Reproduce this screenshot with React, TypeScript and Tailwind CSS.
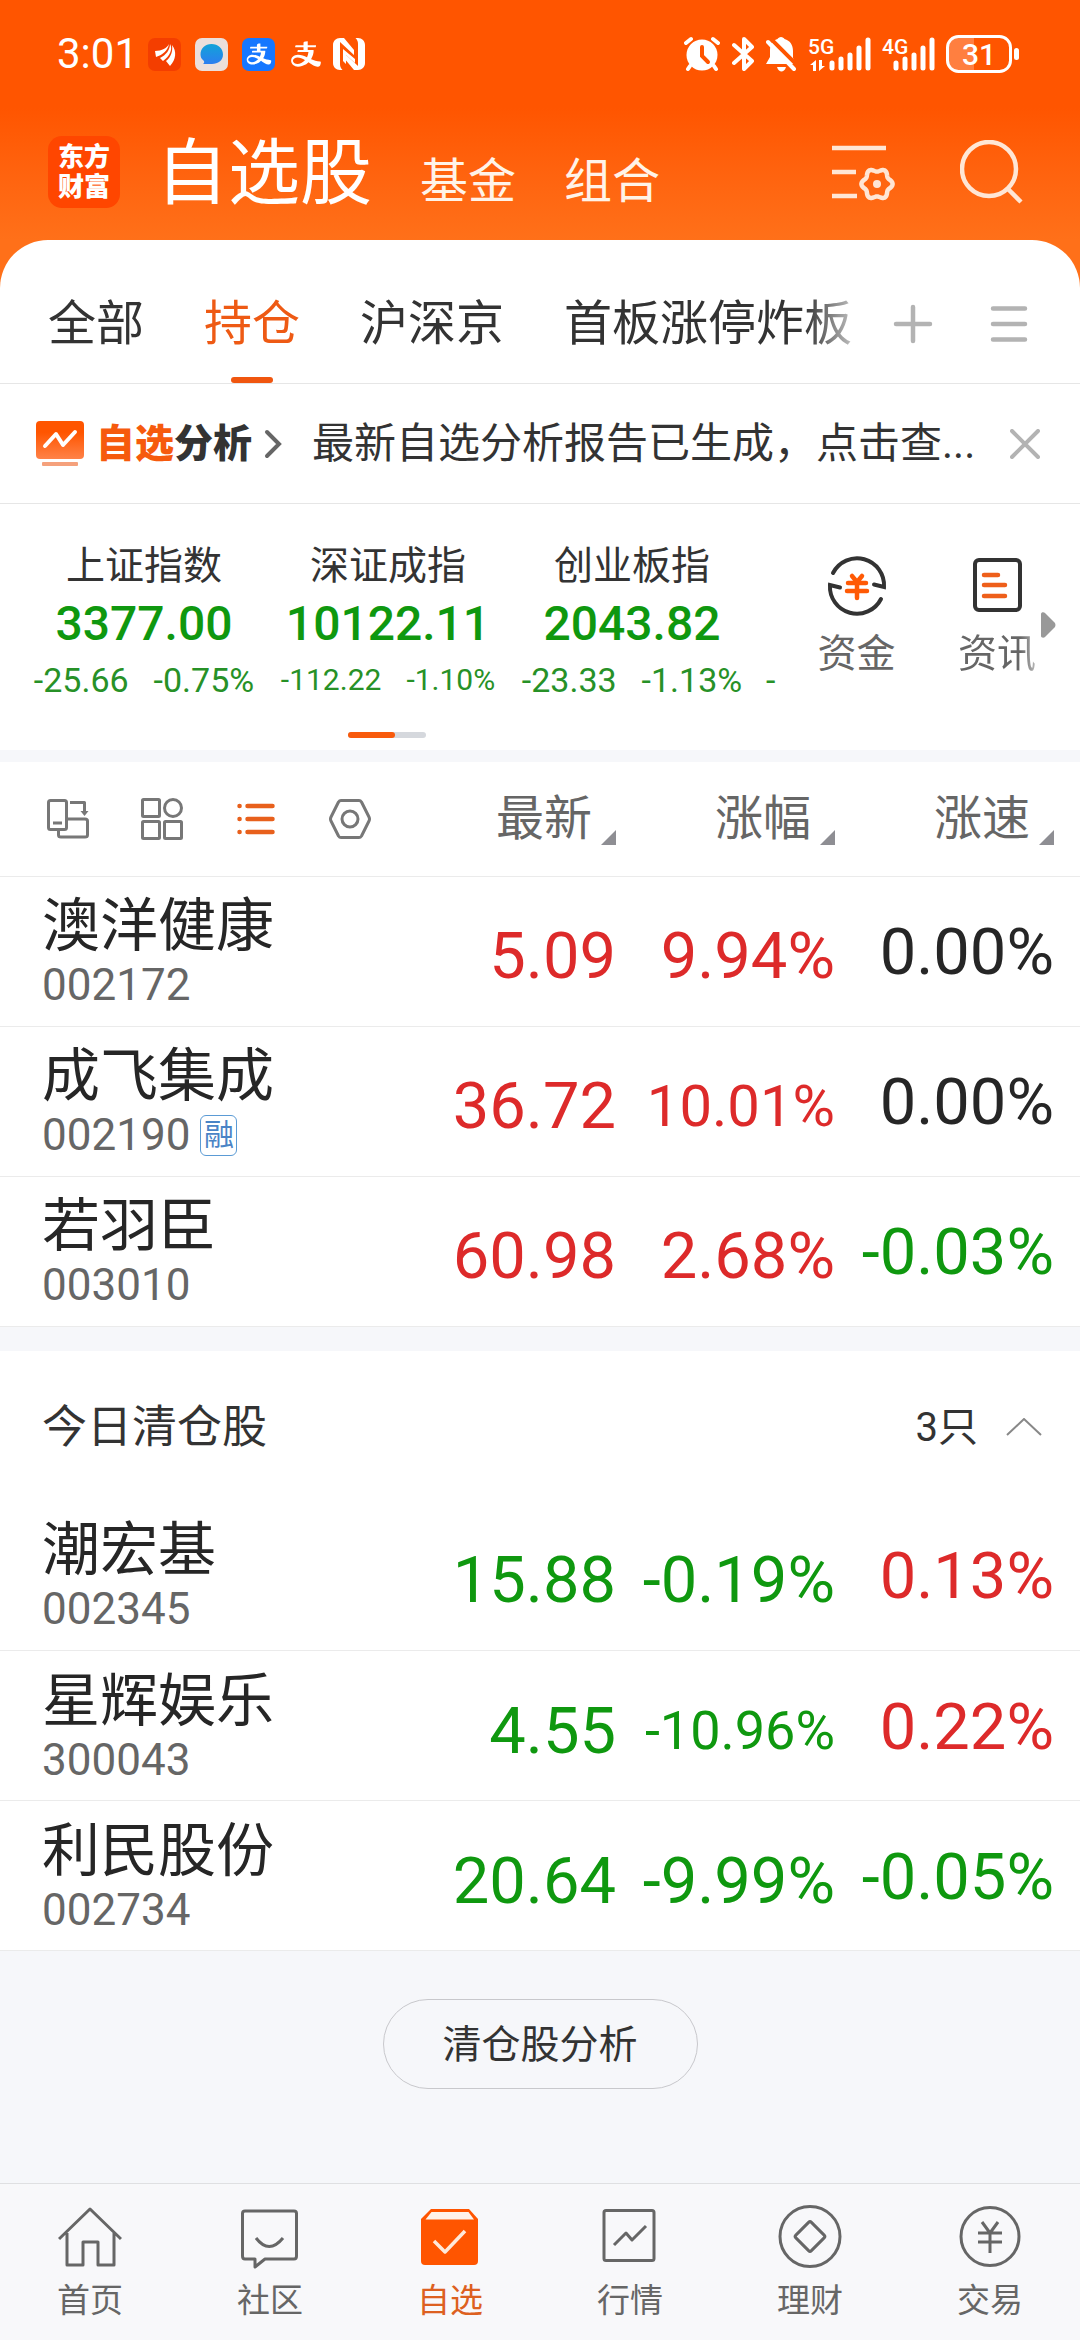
import type { ReactNode } from 'react';
import { AiOutlineAlipay } from 'react-icons/ai';

interface Stock {
    name: string;
    code: string;
    price: string;
    change: string;
    speed: string;
    priceColor: string;
    speedColor: string;
    margin?: boolean;
    changeSize?: string;
}

const RED = 'text-[#dd2a2a]';
const GREEN = 'text-[#0f980f]';
const BLACK = 'text-[#262626]';

const HOLDINGS: Stock[] = [
    { name: '澳洋健康', code: '002172', price: '5.09', change: '9.94%', speed: '0.00%', priceColor: RED, speedColor: BLACK },
    { name: '成飞集成', code: '002190', price: '36.72', change: '10.01%', speed: '0.00%', priceColor: RED, speedColor: BLACK, margin: true, changeSize: 'text-[58px]' },
    { name: '若羽臣', code: '003010', price: '60.98', change: '2.68%', speed: '-0.03%', priceColor: RED, speedColor: GREEN },
];

const CLEARED: Stock[] = [
    { name: '潮宏基', code: '002345', price: '15.88', change: '-0.19%', speed: '0.13%', priceColor: GREEN, speedColor: RED },
    { name: '星辉娱乐', code: '300043', price: '4.55', change: '-10.96%', speed: '0.22%', priceColor: GREEN, speedColor: RED, changeSize: 'text-[54px]' },
    { name: '利民股份', code: '002734', price: '20.64', change: '-9.99%', speed: '-0.05%', priceColor: GREEN, speedColor: GREEN },
];

const INDICES = [
    { name: '上证指数', value: '3377.00', diff: '-25.66', pct: '-0.75%', size: 'text-[34px]' },
    { name: '深证成指', value: '10122.11', diff: '-112.22', pct: '-1.10%', size: 'text-[30px]' },
    { name: '创业板指', value: '2043.82', diff: '-23.33', pct: '-1.13%', size: 'text-[34px]' },
];

const TABS = ['全部', '持仓', '沪深京', '首板涨停炸板'];

// Six-lobed gear outline around the origin
const GEAR_POINTS = Array.from({ length: 72 }, (_, i) => {
    const a = (i * Math.PI) / 36;
    const r = 14 + 1.6 * Math.cos(6 * a);
    return `${(r * Math.cos(a)).toFixed(2)},${(r * Math.sin(a)).toFixed(2)}`;
}).join(' ');

const Signal = ({ label, arrows }: { label: string; arrows?: boolean }) => (
    <svg className="h-[36px] w-[64px]" viewBox="0 0 64 36" fill="#fff">
        <text x={arrows ? 0 : 10} y="18" fontFamily="Roboto" fontSize="21" fontWeight="500">{label}</text>
        {arrows && <path d="M5 25v10H8V24L2 29h3zM11 24v11l6-5h-3v-6z" />}
        <g stroke="#fff" strokeWidth="5" strokeLinecap="round">
            <path d="M24 27v5M33 23v9M42 19v13M51 12v20M60 4v28" />
        </g>
    </svg>
);

const StatusBar = () => (
    <div className="flex h-[108px] items-center pl-[57px] pr-[60px] text-white">
        <span className="text-[42px] leading-[48px]">3:01</span>
        <div className="ml-2.5 flex items-center gap-3.5">
            <svg className="size-[33px]" viewBox="0 0 33 33">
                <rect width="33" height="33" rx="7" fill="#f43e00" />
                <path d="M7 13C14 13 19 10 21 6C20 12 15 17 8 19ZM12 20C18 17 22 12 22 6C25 11 22 18 15 23ZM18 23C23 19 25 13 24 7C29 13 28 22 22 28Z" fill="#fff" />
            </svg>
            <svg className="size-[33px]" viewBox="0 0 33 33">
                <defs>
                    <linearGradient id="bubble" x1="0" y1="0" x2="0" y2="1">
                        <stop offset="0" stopColor="#12a3d8" />
                        <stop offset="1" stopColor="#2c7ef0" />
                    </linearGradient>
                </defs>
                <rect width="33" height="33" rx="7" fill="#ebdfdb" />
                <path d="M16.500 6C23 6 28 10.500 28 16.500S23 26 17 26H8C9.500 25 9.500 23.500 8.500 22.500C6.500 21 5.500 19 5.500 16.500C5.500 10.500 10 6 16.500 6Z" fill="url(#bubble)" />
            </svg>
            <span className="flex size-[33px] items-center justify-center rounded-[7px] bg-[#1677ff]">
                <AiOutlineAlipay className="size-[28px]" />
            </span>
            <AiOutlineAlipay className="size-[34px]" />
            <svg className="-ml-1 size-[32px]" viewBox="0 0 32 32" fill="#fff">
                <path d="M7 0C3 0 0 3 0 7V25C0 29 3 32 7 32H9.500C7.500 30 7 28 7 26V4L21 17V12L11 0Z" />
                <path d="M25 32C29 32 32 29 32 25V7C32 3 29 0 25 0H22.500C24.500 2 25 4 25 6V28L11 15V20L21 32Z" />
                <path d="M10 11L22 21V25L13 17V26L10 23Z" />
            </svg>
        </div>
        <div className="ml-auto flex items-center gap-3">
            <svg className="h-[36px] w-[36px]" viewBox="0 0 36 36" fill="none" strokeLinecap="round">
                <circle cx="18" cy="19" r="15.500" fill="#fff" />
                <path d="M2 7L7 3M34 7L29 3M6 30L4 33M30 30L32 33" stroke="#fff" strokeWidth="4" />
                <path d="M18 11v9l6 6" stroke="#ff5500" strokeWidth="4" />
            </svg>
            <svg className="h-[36px] w-[22px]" viewBox="0 0 22 36" fill="none" stroke="#fff" strokeWidth="4" strokeLinejoin="round" strokeLinecap="round">
                <path d="M2 9L20 25L12 33V3L20 11L2 27" />
            </svg>
            <svg className="h-[36px] w-[30px]" viewBox="0 0 30 36">
                <path d="M15 1C16.500 1 18 2 18.500 3C24 4.500 27 9 27 15V22L30 28H0L4 21V15C4 9 6 4.500 11.500 3C12 2 13.500 1 15 1ZM11 31H20C19 34.500 17 35.500 15.500 35.500S12 34.500 11 31Z" fill="#fff" />
                <path d="M3 1L32 30" stroke="#ff5500" strokeWidth="4" />
                <path d="M2 6L28 33" stroke="#fff" strokeWidth="4" strokeLinecap="round" />
            </svg>
            <Signal label="5G" arrows />
            <div className="-ml-3 -mr-0.5"><Signal label="4G" /></div>
            <svg className="h-[38px] w-[74px]" viewBox="0 0 74 38" fill="none">
                <path d="M28 2H13C7 2 2 7 2 13V25C2 31 7 36 13 36H28Z" fill="#fff" fillOpacity="0.25" />
                <rect x="1.500" y="1.500" width="63" height="35" rx="11" stroke="#fff" strokeWidth="3" />
                <rect x="68" y="13" width="5" height="12" rx="2.500" fill="#fff" />
                <text x="33" y="30" textAnchor="middle" fontFamily="Roboto" fontSize="30" fontWeight="500" fill="#fff">31</text>
            </svg>
        </div>
    </div>
);

const Header = () => (
    <header className="bg-linear-to-b from-[#ff5500] from-45% to-[#ff7019]">
        <StatusBar />
        <div className="flex h-[132px] items-start pl-12 pr-14 text-white">
            <div className="mt-7 flex size-[72px] flex-col items-center justify-center rounded-[14px] bg-[#ff4600] text-[26px] font-black leading-[30px]">
                <span>东方</span>
                <span>财富</span>
            </div>
            <nav className="ml-9 mt-1.5 flex items-baseline gap-12 text-5xl text-[#fff3e8]">
                <a href="#watchlist" className="text-[72px] leading-[120px] text-white">自选股</a>
                <a href="#funds">基金</a>
                <a href="#portfolio">组合</a>
            </nav>
            <div className="ml-auto mt-8 flex gap-[64px]">
                <button type="button" aria-label="列表设置">
                    <svg className="h-[64px] w-[64px]" viewBox="0 0 64 64" fill="none" stroke="#ffe6d5" strokeWidth="4.500">
                        <path d="M0 8H54M0 32H24M0 56H25" />
                        <g transform="translate(45 44)">
                            <polygon points={GEAR_POINTS} strokeLinejoin="round" />
                            <circle r="4" fill="#ffe6d5" stroke="none" />
                        </g>
                    </svg>
                </button>
                <button type="button" aria-label="搜索">
                    <svg className="h-[64px] w-[64px]" viewBox="0 0 64 64" fill="none" stroke="#ffe6d5" strokeWidth="4.500">
                        <circle cx="29" cy="29" r="27" />
                        <path d="M47 48L61 62" />
                    </svg>
                </button>
            </div>
        </div>
    </header>
);

const GroupTabs = () => (
    <div className="flex h-[144px] items-stretch border-b border-[#e6e6e6] pl-12 pr-[51px]">
        <div className="flex min-w-0 flex-1 gap-[60px] overflow-hidden [mask-image:linear-gradient(to_right,#000_94%,rgba(0,0,0,0.3))]">
            {TABS.map(tab => (
                <button
                    key={tab}
                    type="button"
                    className={`relative shrink-0 whitespace-nowrap pt-6 text-5xl leading-[60px] ${tab === '持仓' ? 'text-[#ee5a14]' : 'text-[#333]'}`}
                >
                    {tab}
                    {tab === '持仓' && <span className="absolute bottom-0 left-1/2 h-1.5 w-[42px] -translate-x-1/2 rounded-full bg-[#f0560f]" />}
                </button>
            ))}
        </div>
        <button type="button" aria-label="添加分组" className="ml-10 pt-6">
            <svg className="size-[40px]" viewBox="0 0 40 40" stroke="#b3b3b3" strokeWidth="4.500" strokeLinecap="round">
                <path d="M3 20H37M20 3V37" />
            </svg>
        </button>
        <button type="button" aria-label="全部分组" className="ml-14 pt-6">
            <svg className="size-[40px]" viewBox="0 0 40 40" stroke="#b3b3b3" strokeWidth="4.500" strokeLinecap="round">
                <path d="M4 4.500H36M4 20H36M4 35.500H36" />
            </svg>
        </button>
    </div>
);

const AnalysisBanner = () => (
    <div className="flex h-[120px] items-center border-b border-[#e6e6e6] pl-9 pr-10">
        <svg className="h-[48px] w-[48px] shrink-0" viewBox="0 0 48 48" fill="none">
            <defs>
                <linearGradient id="banner" x1="0" y1="0" x2="0" y2="1">
                    <stop offset="0.300" stopColor="#ff5500" />
                    <stop offset="1" stopColor="#ff8248" />
                </linearGradient>
            </defs>
            <rect y="1" width="48" height="38" rx="4" fill="url(#banner)" />
            <rect x="6" y="42" width="36" height="4" rx="1" fill="#f5a17c" />
            <path d="M9 26L20 14L27 25L39 12" stroke="#fff" strokeWidth="4" strokeLinecap="round" strokeLinejoin="round" />
        </svg>
        <a href="#analysis" className="ml-3 flex shrink-0 items-center text-[39px] font-black leading-[48px] text-[#333]">
            <span className="text-[#f65a0d]">自选</span>分析
            <svg className="ml-3 h-[30px] w-[18px]" viewBox="0 0 18 30" fill="none" stroke="#666" strokeWidth="4" strokeLinecap="round">
                <path d="M3 3L15 15L3 27" />
            </svg>
        </a>
        <a href="#report" className="ml-[30px] min-w-0 flex-1 overflow-hidden whitespace-nowrap text-[42px] leading-[48px] text-[#333]">
            最新自选分析报告已生成，点击查...
        </a>
        <button type="button" aria-label="关闭" className="shrink-0">
            <svg className="size-[30px]" viewBox="0 0 30 30" stroke="#b3b3b3" strokeWidth="4" strokeLinecap="round">
                <path d="M2 2L28 28M28 2L2 28" />
            </svg>
        </button>
    </div>
);

const IndexPanel = () => (
    <section className="flex h-[246px] items-start pl-[22px] pr-6">
        <div className="min-w-0 flex-1">
            <div className="flex overflow-hidden pt-[38px]">
                {INDICES.map(item => (
                    <div key={item.name} className="flex w-[244px] shrink-0 flex-col items-center whitespace-nowrap">
                        <span className="text-[39px] leading-[48px] text-[#333]">{item.name}</span>
                        <span className="mt-1 text-[48px] font-medium leading-[60px] text-[#0f980f]">{item.value}</span>
                        <span className={`mt-0.5 flex gap-[25px] leading-[48px] text-[#279127] ${item.size}`}>
                            <span>{item.diff}</span>
                            <span>{item.pct}</span>
                        </span>
                    </div>
                ))}
                <span className="mt-[114px] pl-3 text-[34px] leading-[48px] text-[#279127]">-</span>
            </div>
            <div className="ml-[326px] mt-7 flex h-1.5 w-[78px] rounded-full bg-[#d5d8dd]">
                <span className="w-[47px] rounded-full bg-[#f85a0c]" />
            </div>
        </div>
        <div className="flex items-start pt-[50px] text-[39px] leading-[48px] text-[#666]">
            <a href="#capital" className="flex w-[141px] flex-col items-center">
                <svg className="size-[64px]" viewBox="-32 -32 64 64" fill="none" stroke="#333" strokeWidth="4" strokeLinecap="round">
                    <path d="M-24 -13A27 27 0 0 1 27 1L17 -1.500M24 13A27 27 0 0 1 -27 -1L-17 1.500" />
                    <path d="M-5 -10L0 -4L5 -10M-9 -3H9M-10 5H10M0 -4V12" stroke="#ff5a05" strokeWidth="4.500" />
                </svg>
                <span className="mt-3">资金</span>
            </a>
            <a href="#news" className="flex w-[113px] flex-col items-end">
                <svg className="mr-3 size-[64px]" viewBox="0 0 64 64" fill="none" stroke="#333" strokeWidth="4">
                    <rect x="11" y="6" width="45" height="50" rx="4" />
                    <path d="M20 21H34M20 31H41M20 42H41" stroke="#ee5f1a" strokeWidth="4.500" strokeLinecap="round" />
                </svg>
                <span className="mr-1 mt-3 bg-linear-to-r from-[#666] from-80% to-[#bbb] bg-clip-text text-transparent">资讯</span>
            </a>
            <svg className="mt-[58px] h-[26px] w-[16px]" viewBox="0 0 16 26" fill="#999">
                <path d="M1 2C1 0 4 0 5 1L15 11Q16 13 15 15L5 25C4 26 1 26 1 24Z" />
            </svg>
        </div>
    </section>
);

const ViewButton = ({ label, color, children }: { label: string; color: string; children: ReactNode }) => (
    <button type="button" aria-label={label} className={color}>
        <svg className="size-[42px]" viewBox="0 0 42 42" fill="none" stroke="currentColor" strokeWidth="3" strokeLinejoin="round">
            {children}
        </svg>
    </button>
);

const Columns = () => (
    <colgroup>
        <col />
        <col className="w-[219px]" />
        <col className="w-[219px]" />
        <col className="w-[245px]" />
    </colgroup>
);

const SortHeader = ({ label, last }: { label: string; last?: boolean }) => (
    <th scope="col" className={`font-normal ${last ? 'pr-[26px]' : ''}`}>
        <button type="button" className="ml-auto flex items-end gap-[9px] text-5xl leading-[60px] text-[#666]">
            {label}
            <svg className="mb-1 size-[15px]" viewBox="0 0 15 15" fill="#8e8e93"><path d="M15 0V15H0z" /></svg>
        </button>
    </th>
);

const StockRow = ({ stock }: { stock: Stock }) => (
    <tr className="h-[150px] border-b border-[#ebebeb] text-right text-[65px] leading-[72px]">
        <td className="pl-[42px] text-left">
            <div className="text-[58px] leading-[66px] text-[#262626]">{stock.name}</div>
            <div className="mt-0.5 flex h-[48px] items-center gap-2.5 text-[44px] leading-[48px] text-[#666]">
                {stock.code}
                {stock.margin && (
                    <span className="flex h-[41px] w-[37px] items-center justify-center rounded-md border border-[#5b9bd5] text-[30px] leading-[36px] text-[#4a84c6]">融</span>
                )}
            </div>
        </td>
        <td className={`pt-2.5 ${stock.priceColor}`}>{stock.price}</td>
        <td className={`pt-2.5 ${stock.priceColor} ${stock.changeSize ?? ''}`}>{stock.change}</td>
        <td className={`pr-[26px] pt-0.5 ${stock.speedColor}`}>{stock.speed}</td>
    </tr>
);

const NAV_ITEMS = [
    { label: '首页', icon: <path d="M1 34L32 4L63 34M9 28V60H25V37H40V60H56V28" /> },
    { label: '社区', icon: <path d="M7 6H56Q58.500 6 58.500 8.500V51Q58.500 54 56 54H27L17 62V54H7Q4.500 54 4.500 51V8.500Q4.500 6 7 6ZM18 33Q31 50 45 33" /> },
    {
        label: '自选',
        active: true,
        icon: (
            <>
                <path d="M13 4H51L60 14V56Q60 60 56 60H7Q3 60 3 56V14Z" fill="#ff5500" stroke="none" />
                <path d="M13.500 7H50.500L56 14.500H7.500Z" fill="#fff3ea" stroke="none" />
                <path d="M16 36L27 47L47 26" stroke="#ffe9d9" strokeWidth="3.500" />
            </>
        ),
    },
    { label: '行情', icon: <><rect x="6" y="5.500" width="50" height="50" rx="2" /><path d="M16 40L28 28L34 35L48 21" /></> },
    { label: '理财', icon: <><circle cx="32" cy="31.500" r="30" /><rect x="21" y="20.500" width="22" height="22" rx="2" transform="rotate(45 32 31.500)" /></> },
    { label: '交易', icon: <><circle cx="32" cy="31.500" r="29" /><path d="M24 17L32 28L40 17M20 28H44M20 37H44M32 28V48" /></> },
];

const BottomNav = () => (
    <nav className="grid h-[157px] grid-cols-6 border-t border-[#dfe0e2] bg-[#f8f8fa] pt-[21px]">
        {NAV_ITEMS.map(item => (
            <a key={item.label} href="#" className={`flex flex-col items-center text-[33px] leading-[40px] ${item.active ? 'text-[#dd6020]' : 'text-[#666]'}`}>
                <svg className="size-[64px]" viewBox="0 0 64 64" fill="none" stroke="currentColor" strokeWidth="3" strokeLinejoin="round">
                    {item.icon}
                </svg>
                <span className="mt-3">{item.label}</span>
            </a>
        ))}
    </nav>
);

const App = () => {
    return (
        <div className="flex min-h-screen flex-col bg-[#f6f7fa] font-[Roboto,'Noto_Sans_CJK_SC',sans-serif]">
            <Header />
            <main className="flex flex-1 flex-col">
                <div className="bg-[#ff7019]">
                    <div className="rounded-t-[48px] bg-white">
                        <GroupTabs />
                        <AnalysisBanner />
                        <IndexPanel />
                    </div>
                </div>

                {/* Current holdings */}
                <table className="mt-3 w-full table-fixed bg-white">
                    <Columns />
                    <thead>
                        <tr className="h-[114px] border-b border-[#ebebeb]">
                            <th className="pl-[47px] font-normal">
                                <div className="flex gap-[52px]">
                                    <ViewButton label="横屏" color="text-[#777]">
                                        <rect x="1.500" y="2.500" width="18" height="29" rx="2" />
                                        <path d="M6 25H15M20 21H38Q40.500 21 40.500 23V37Q40.500 39 38 39H14Q11.500 39 11.500 37V32M23 4.500H37.500V13" />
                                        <path d="M33.500 13H41.500L37.500 18Z" fill="currentColor" stroke="none" />
                                    </ViewButton>
                                    <ViewButton label="宫格" color="text-[#777]">
                                        <rect x="1.500" y="1.500" width="17" height="17" rx="1" />
                                        <circle cx="32" cy="10" r="8.500" />
                                        <rect x="1.500" y="23.500" width="17" height="17" rx="1" />
                                        <rect x="23.500" y="23.500" width="17" height="17" rx="1" />
                                    </ViewButton>
                                    <ViewButton label="列表" color="text-[#e8601c]">
                                        <path d="M12.500 8H37.500M12.500 21H37.500M12.500 34H37.500M4.500 8h.1M4.500 21h.1M4.500 34h.1" strokeWidth="4.500" strokeLinecap="round" />
                                    </ViewButton>
                                    <ViewButton label="设置" color="text-[#777]">
                                        <path d="M12 2.500H30Q31.500 2.500 32.500 4L40 19Q41 21 40 23L32.500 38Q31.500 39.500 30 39.500H12Q10.500 39.500 9.500 38L2 23Q1 21 2 19L9.500 4Q10.500 2.500 12 2.500Z" />
                                        <circle cx="21" cy="21" r="8" />
                                    </ViewButton>
                                </div>
                            </th>
                            <SortHeader label="最新" />
                            <SortHeader label="涨幅" />
                            <SortHeader label="涨速" last />
                        </tr>
                    </thead>
                    <tbody>
                        {HOLDINGS.map(stock => <StockRow key={stock.code} stock={stock} />)}
                    </tbody>
                </table>

                {/* Positions closed today */}
                <section className="mt-6 bg-white">
                    <div className="flex h-[150px] items-center pl-[42px] pr-[38px] pt-1 text-[#333]">
                        <h2 className="text-[45px] leading-[60px]">今日清仓股</h2>
                        <button type="button" className="ml-auto flex items-center gap-7 text-[40px] leading-[60px]">
                            3只
                            <svg className="h-[20px] w-[36px]" viewBox="0 0 36 20" fill="none" stroke="#888" strokeWidth="2">
                                <path d="M1 17L18 1L35 17" />
                            </svg>
                        </button>
                    </div>
                    <table className="w-full table-fixed">
                        <Columns />
                        <tbody>
                            {CLEARED.map(stock => <StockRow key={stock.code} stock={stock} />)}
                        </tbody>
                    </table>
                </section>

                <button type="button" className="mx-auto mt-12 h-[90px] w-[315px] rounded-full border border-[#c8c8cc] pt-0.5 text-[39px] leading-[48px] text-[#333]">
                    清仓股分析
                </button>
            </main>
            <BottomNav />
        </div>
    );
};

export default App;
